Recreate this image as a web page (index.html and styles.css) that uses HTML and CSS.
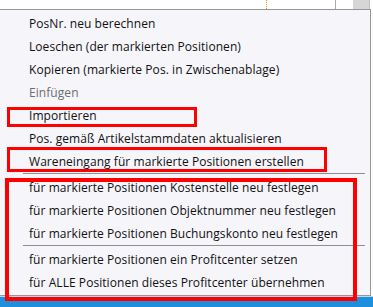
FILE: index.html
```html
<!DOCTYPE html>
<html lang="de">
<head>
    <meta charset="UTF-8">
    <title>Kontextmenü Positionen</title>
    <link rel="stylesheet" href="styles.css">
</head>
<body>

<div class="screen">
    <div class="grid-top">
        <div class="cell cell-wide"></div>
        <div class="cell cell-dotted"></div>
        <div class="cell cell-mid"></div>
        <div class="cell cell-scroll"></div>
        <div class="cell cell-end"></div>
    </div>

    <div class="menu">
        <div class="item">PosNr. neu berechnen</div>
        <div class="item">Loeschen (der markierten Positionen)</div>
        <div class="item">Kopieren (markierte Pos. in Zwischenablage)</div>
        <div class="item disabled">Einfügen</div>
        <div class="item">Importieren</div>
        <div class="item">Pos. gemäß Artikelstammdaten aktualisieren</div>
        <div class="item">Wareneingang für markierte Positionen erstellen</div>
        <div class="separator"></div>
        <div class="item">für markierte Positionen Kostenstelle neu festlegen</div>
        <div class="item">für markierte Positionen Objektnummer neu festlegen</div>
        <div class="item">für markierte Positionen Buchungskonto neu festlegen</div>
        <div class="separator"></div>
        <div class="item">für markierte Positionen ein Profitcenter setzen</div>
        <div class="item">für ALLE Positionen dieses Profitcenter übernehmen</div>
    </div>

    <div class="taskbar"></div>

    <!-- red markings drawn over the screenshot -->
    <div class="mark mark-import"></div>
    <div class="mark mark-wareneingang"></div>
    <div class="mark mark-group"></div>
</div>

</body>
</html>
```

FILE: styles.css
```css
body { margin: 0; background-color: #fff; font-family: "Segoe UI", "Open Sans", sans-serif; font-size: 12px; color: #111; }
.screen { position: relative; width: 373px; height: 307px; overflow: hidden; background-color: #fff; }

.grid-top { display: flex; height: 9px; }
.cell { height: 100%; }
.cell-wide { width: 266px; }
.cell-dotted { width: 68px; border-left: 1px dotted #e8902a; }
.cell-mid { width: 17px; border-left: 1px solid #a9a9a9; }
.cell-scroll { width: 16px; background-color: #d6d6d6; }
.cell-end { flex: 1; border-left: 1px solid #bdbdbd; }

.menu { width: 372px; margin-left: -1px; padding: 2px 0 1px; background-color: #f6f5fa; border: 1px solid #979797; box-sizing: border-box; }
.item { height: 23px; line-height: 23px; padding-left: 29px; white-space: nowrap; letter-spacing: 0.06px; }
.item.disabled { color: #6d6d6d; }
.separator { height: 3px; margin: 0 5px 0 23px; border-top: 1px solid #8e8e99; box-sizing: border-box; }

.taskbar { height: 11px; background-color: #1e8fdc; border-top: 1px solid #b8d9f0; }

.mark { position: absolute; border: 3px solid #ff0000; box-sizing: border-box; }
.mark-import { left: 7px; top: 107px; width: 190px; height: 20px; }
.mark-wareneingang { left: 7px; top: 147px; width: 320px; height: 25px; }
.mark-group { left: 5px; top: 178px; width: 352px; height: 123px; border-width: 4px; }
```
